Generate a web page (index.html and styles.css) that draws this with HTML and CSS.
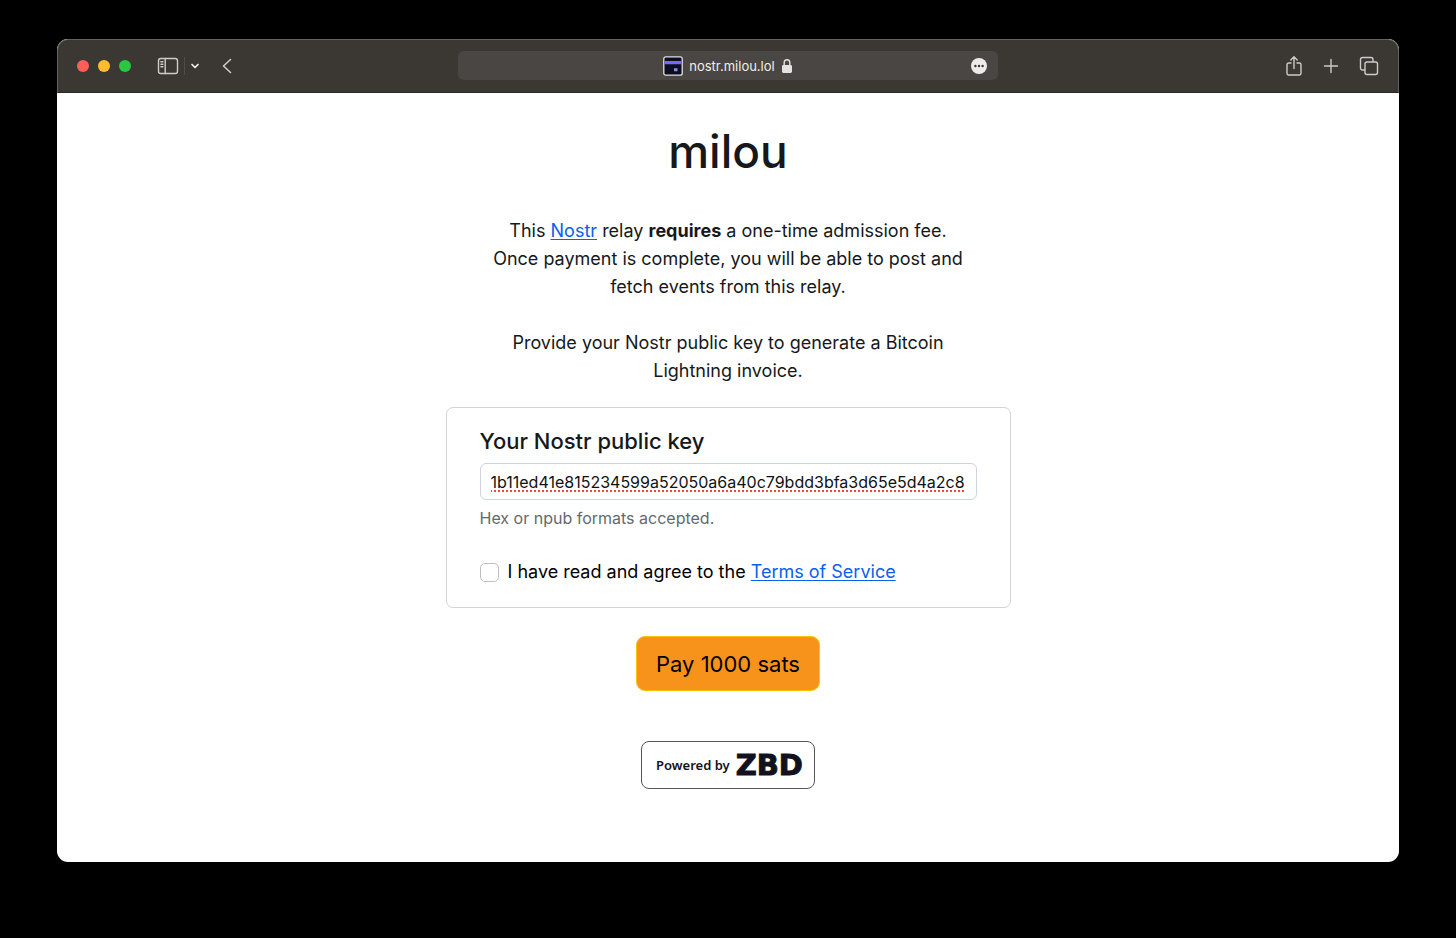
FILE: index.html
```html
<!DOCTYPE html>
<html lang="en">
<head>
<meta charset="utf-8">
<meta name="viewport" content="width=device-width, initial-scale=1">
<title>milou</title>
<link rel="stylesheet" href="styles.css">
</head>
<body>
<div class="window">
  <header class="toolbar">
    <div class="toolbar-left">
      <div class="lights">
        <button class="light light-close" aria-label="Close"></button>
        <button class="light light-minimize" aria-label="Minimize"></button>
        <button class="light light-zoom" aria-label="Zoom"></button>
      </div>
      <div class="sidebar-group">
        <button class="tool" aria-label="Show sidebar">
          <svg width="22" height="18" viewBox="0 0 22 18" fill="none" stroke="currentColor" stroke-width="1.4" stroke-linecap="round"><rect x="1.5" y="1.5" width="19" height="15" rx="2.2"/><path d="M8.2 1.5v15M3.9 4.7h2M3.9 7.2h2M3.9 9.7h2"/></svg>
        </button>
        <span class="divider"></span>
        <button class="tool tool-bright" aria-label="Tab groups">
          <svg width="10" height="8" viewBox="0 0 10 8" fill="none" stroke="currentColor" stroke-width="1.7" stroke-linecap="round" stroke-linejoin="round"><path d="M2 2.5l3 3 3-3"/></svg>
        </button>
      </div>
      <button class="tool" aria-label="Back">
        <svg width="12" height="18" viewBox="0 0 12 18" fill="none" stroke="currentColor" stroke-width="1.6" stroke-linecap="round" stroke-linejoin="round"><path d="M9.5 2.5L2.500 9l7 6.500"/></svg>
      </button>
    </div>
    <div class="address">
      <div class="site">
        <svg width="20" height="20" viewBox="0 0 20 20"><rect x=".8" y=".8" width="18.400" height="18.400" rx="2" fill="#0d0d22" stroke="#e4e2e0" stroke-width="1.300"/><path fill="#7a68ee" d="M1.500 5h17v3.200h-17z"/><path fill="#8f8bdc" d="M11 12.200h3.500v3H11z"/></svg>
        <span>nostr.milou.lol</span>
        <svg width="12" height="16" viewBox="0 0 12 16"><rect x="1" y="7" width="10" height="8" rx="1.400" fill="#e4e2e0"/><path d="M3.200 7.500V4.600a2.800 2.800 0 0 1 5.600 0v2.900" fill="none" stroke="#e4e2e0" stroke-width="1.400"/></svg>
      </div>
      <button class="tool page-menu" aria-label="Page menu">
        <svg width="16" height="16" viewBox="0 0 16 16"><circle cx="8" cy="8" r="8" fill="#eeecea"/><g fill="#393632"><circle cx="4.400" cy="8" r="1.200"/><circle cx="8" cy="8" r="1.200"/><circle cx="11.600" cy="8" r="1.200"/></g></svg>
      </button>
    </div>
    <div class="toolbar-right">
      <button class="tool" aria-label="Share">
        <svg width="18" height="22" viewBox="0 0 18 22" fill="none" stroke="currentColor" stroke-width="1.4" stroke-linecap="round" stroke-linejoin="round"><path d="M6 8H3.700A1.700 1.700 0 0 0 2 9.700v8.600A1.700 1.700 0 0 0 3.700 20h10.600a1.700 1.700 0 0 0 1.700-1.700V9.700A1.700 1.700 0 0 0 14.300 8H12M9 13.500V2M5.800 5L9 1.800 12.200 5"/></svg>
      </button>
      <button class="tool" aria-label="New tab">
        <svg width="16" height="16" viewBox="0 0 16 16" fill="none" stroke="currentColor" stroke-width="1.4" stroke-linecap="round"><path d="M8 1.500v13M1.500 8h13"/></svg>
      </button>
      <button class="tool" aria-label="Tab overview">
        <svg width="20" height="20" viewBox="0 0 20 20" fill="none" stroke="currentColor" stroke-width="1.4" stroke-linejoin="round"><rect x="6" y="6" width="12.500" height="12.500" rx="2"/><path d="M6 14H3.500a2 2 0 0 1-2-2V3.500a2 2 0 0 1 2-2H12a2 2 0 0 1 2 2V6"/></svg>
      </button>
    </div>
  </header>
  <main class="page">
    <h1 class="title">milou</h1>
    <div class="intro">
      <p>This <a href="#nostr">Nostr</a> relay <strong>requires</strong> a one-time admission fee.<br>Once payment is complete, you will be able to post and fetch events from this relay.</p>
      <p>Provide your Nostr public key to generate a Bitcoin Lightning invoice.</p>
    </div>
    <form class="form">
      <div class="card">
        <label class="key-label" for="pubkey">Your Nostr public key</label>
        <input class="key-input" id="pubkey" type="text" spellcheck="false" aria-describedby="key-help" value="1b11ed41e815234599a52050a6a40c79bdd3bfa3d65e5d4a2c8">
        <p class="help" id="key-help">Hex or npub formats accepted.</p>
        <div class="terms">
          <input class="check" id="tos" type="checkbox">
          <label for="tos">I have read and agree to the <a href="#terms">Terms of Service</a></label>
        </div>
      </div>
      <button class="pay" type="button">Pay 1000 sats</button>
    </form>
    <a class="powered" href="#zbd"><span>Powered by</span><span class="zbd">ZBD</span></a>
  </main>
</div>
</body>
</html>
```
FILE: styles.css
```css
* {
  box-sizing: border-box;
}

body {
  margin: 0;
  min-height: 100vh;
  padding: 39px 57px 76px;
  display: flex;
  background: #000;
  color: #16181b;
  font-family: Inter, "Liberation Sans", sans-serif;
  font-size: 18px;
  line-height: 28px;
}

button,
input {
  font-family: inherit;
  margin: 0;
}

p,
h1 {
  margin: 0;
}

a {
  color: #0a60ee;
  text-decoration-thickness: 1px;
  text-underline-offset: 2px;
}

.window {
  flex: 1;
  min-width: 0;
  display: flex;
  flex-direction: column;
  border-radius: 11px;
  overflow: hidden;
  background: #fff;
}

.toolbar {
  height: 54px;
  display: grid;
  grid-template-columns: 1fr minmax(0, 540px) 1fr;
  align-items: center;
  padding: 0 19px 1px;
  background: #3b3733;
  border: 1px solid #65625f;
  border-bottom-color: #2b2825;
  border-radius: 11px 11px 0 0;
}

.toolbar-left,
.lights,
.sidebar-group,
.toolbar-right,
.site {
  display: flex;
  align-items: center;
}

.toolbar-left {
  gap: 21px;
}

.lights {
  gap: 9px;
  margin-right: 5px;
}

.light {
  width: 12px;
  height: 12px;
  padding: 0;
  border: 0;
  border-radius: 50%;
}

.light-close {
  background: #ff5f57;
}

.light-minimize {
  background: #febc2e;
}

.light-zoom {
  background: #28c840;
}

.sidebar-group {
  gap: 5px;
}

.divider {
  width: 1px;
  height: 18px;
  background: #504c49;
}

.tool {
  display: flex;
  padding: 0;
  border: 0;
  background: none;
  color: #cecbc8;
}

.tool-bright {
  color: #f0eeec;
}

.address {
  height: 29px;
  display: grid;
  grid-template-columns: 1fr auto 1fr;
  align-items: center;
  padding: 0 11px;
  border-radius: 6px;
  background: #4a4643;
  color: #f0eeec;
  font-size: 13px;
  line-height: 18px;
}

.site {
  grid-column: 2;
  gap: 6px;
}

.page-menu {
  justify-self: end;
}

.toolbar-right {
  justify-content: flex-end;
  gap: 20px;
}

.page {
  flex: 1;
  display: flex;
  flex-direction: column;
  align-items: center;
  padding: 29px 24px 72px;
}

.title {
  font-size: 46px;
  font-weight: 500;
  line-height: 58px;
}

.intro {
  max-width: 480px;
  margin-top: 37px;
  display: grid;
  gap: 28px;
  text-align: center;
}

.form {
  width: 100%;
  max-width: 565px;
  margin-top: 22px;
  display: flex;
  flex-direction: column;
  align-items: center;
}

.card {
  width: 100%;
  display: flex;
  flex-direction: column;
  padding: 19px 33px 21px;
  border: 1px solid #d3d4d5;
  border-radius: 7px;
}

.key-label {
  font-size: 22px;
  font-weight: 500;
}

.key-input {
  width: 100%;
  height: 37px;
  margin-top: 8px;
  padding: 0 10px;
  border: 1px solid #ced4da;
  border-radius: 6px;
  background: #fff;
  color: #111;
  font-size: 16px;
  text-decoration: underline dotted #f0443c 2px;
  text-underline-offset: 3px;
}

.help {
  margin-top: 6px;
  color: #63696f;
  font-size: 16px;
  line-height: 24px;
}

.terms {
  display: flex;
  align-items: center;
  gap: 9px;
  margin-top: 28px;
  color: #000;
}

.check {
  appearance: none;
  width: 19px;
  height: 19px;
  border: 1px solid #bfbfbf;
  border-radius: 5px;
  background: #fff;
}

.pay {
  margin-top: 28px;
  padding: 13px 19px 11px;
  border: 1px solid #ffc107;
  border-radius: 9px;
  background: #f7931a;
  color: #000;
  font-size: 22px;
  line-height: 29px;
}

.powered {
  display: flex;
  align-items: center;
  gap: 6px;
  height: 48px;
  margin-top: 50px;
  padding: 0 11px 0 14px;
  border: 1px solid #55555c;
  border-radius: 8px;
  color: #11111f;
  font-family: "Noto Sans", sans-serif;
  font-size: 13px;
  font-weight: 600;
  text-decoration: none;
}

.zbd {
  font-family: "DejaVu Sans", sans-serif;
  font-size: 29px;
  font-weight: 700;
  -webkit-text-stroke: 1px #11111f;
}
```
